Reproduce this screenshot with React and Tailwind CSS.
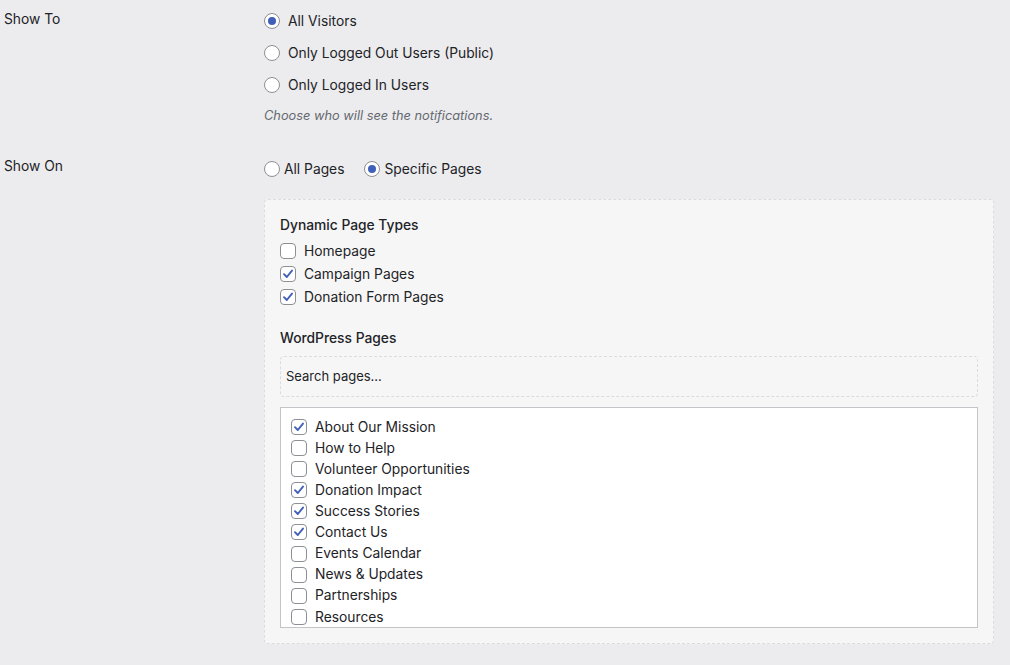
import React from "react";

const Radio = ({ checked }) => (
  <span className="w-4 h-4 rounded-full border border-[#8c8f94] bg-white flex items-center justify-center shrink-0">
    {checked && <span className="w-2 h-2 rounded-full bg-[#3f5fb8]" />}
  </span>
);

const Check = ({ checked }) => (
  <span className="w-4 h-4 rounded-[4px] border border-[#8c8f94] bg-white flex items-center justify-center shrink-0">
    {checked && (
      <svg width="14" height="14" viewBox="0 0 14 14" fill="none">
        <path d="M3 7.2 L5.8 10 L11 3.6" stroke="#3f5fb8" strokeWidth="1.9" strokeLinecap="round" strokeLinejoin="round" />
      </svg>
    )}
  </span>
);

const pages = [
  ["About Our Mission", true],
  ["How to Help", false],
  ["Volunteer Opportunities", false],
  ["Donation Impact", true],
  ["Success Stories", true],
  ["Contact Us", true],
  ["Events Calendar", false],
  ["News & Updates", false],
  ["Partnerships", false],
  ["Resources", false],
];

export default function App() {
  return (
    <div
      className="w-[1010px] h-[665px] bg-[#ececee] text-[#1d2327] text-[13.8px] overflow-hidden"
      style={{ fontFamily: "Inter, 'Noto Sans', sans-serif" }}
    >
      <div className="flex pt-[10px]">
        <div className="w-[264px] pl-[4px] leading-[18px]">Show To</div>
        <div className="flex flex-col pt-[1px]">
          <label className="flex items-center gap-[8px] h-[20px]"><Radio checked /> <span>All Visitors</span></label>
          <label className="flex items-center gap-[8px] h-[20px] mt-[12px]"><Radio /> <span>Only Logged Out Users (Public)</span></label>
          <label className="flex items-center gap-[8px] h-[20px] mt-[12px]"><Radio /> <span>Only Logged In Users</span></label>
          <p className="italic text-[12.8px] text-[#646970] mt-[13px] leading-[16px]">Choose who will see the notifications.</p>
        </div>
      </div>

      <div className="flex mt-[32px]">
        <div className="w-[264px] pl-[4px] leading-[18px] pt-[1px]">Show On</div>
        <div className="flex flex-col">
          <div className="flex items-center h-[20px] mt-[3px]">
            <label className="flex items-center gap-[4px]"><Radio /> <span>All Pages</span></label>
            <label className="flex items-center gap-[4px] ml-[20px]"><Radio checked /> <span>Specific Pages</span></label>
          </div>
          <div className="mt-[20px] w-[730px] h-[445px] bg-[#f6f6f6] border border-dashed border-[#dcdcde] rounded-[4px] px-[15px] pt-[16px]">
            <div className="font-medium leading-[18px]">Dynamic Page Types</div>
            <div className="mt-[8px] flex flex-col gap-[5px]">
              {[["Homepage", false], ["Campaign Pages", true], ["Donation Form Pages", true]].map(([t, c]) => (
                <label key={t} className="flex items-center gap-[8px] h-[18px]"><Check checked={c} /> <span>{t}</span></label>
              ))}
            </div>
            <div className="font-medium leading-[18px] mt-[23px]">WordPress Pages</div>
            <div className="mt-[9px] h-[41px] border border-dashed border-[#dcdcde] rounded-[4px] bg-[#f6f6f6] flex items-center px-[5px] text-[13px]">
              Search pages...
            </div>
            <div className="mt-[10px] h-[221px] bg-white border border-[#c3c4c7] pl-[10px] pt-[10px] flex flex-col gap-[3.1px]">
              {pages.map(([t, c]) => (
                <label key={t} className="flex items-center gap-[8px] h-[18px]"><Check checked={c} /> <span>{t}</span></label>
              ))}
            </div>
          </div>
        </div>
      </div>
    </div>
  );
}
